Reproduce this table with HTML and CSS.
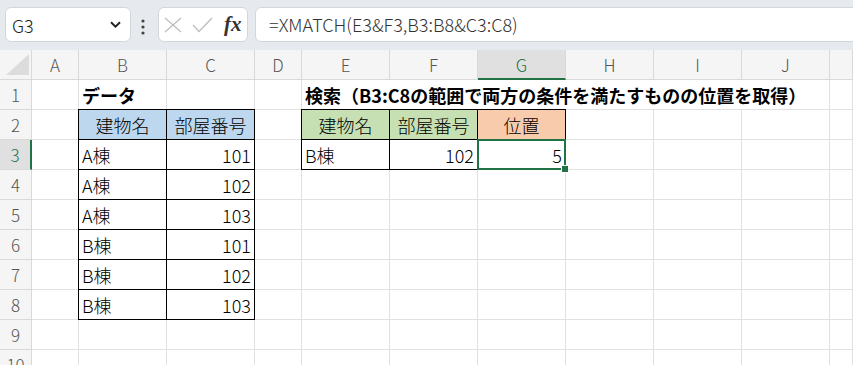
FILE: index.html
```html
<!DOCTYPE html>
<html lang="ja">
<head>
    <meta charset="UTF-8">
    <title>XMATCH</title>
    <link rel="stylesheet" href="styles.css">
</head>
<body>
    <!-- formula bar -->
    <div class="toolbar">
        <div class="name-box">
            <span>G3</span>
            <svg class="chev" width="11" height="7" viewBox="0 0 11 7"><path d="M1 1.2 L5.5 5.6 L10 1.2" fill="none" stroke="#222" stroke-width="2"/></svg>
        </div>
        <svg class="dots" width="6" height="16" viewBox="0 0 6 16"><circle cx="3" cy="2" r="1.6" fill="#444"/><circle cx="3" cy="8" r="1.6" fill="#444"/><circle cx="3" cy="14" r="1.6" fill="#444"/></svg>
        <div class="fx-box">
            <svg width="18" height="16" viewBox="0 0 18 16"><path d="M1 1 L17 15 M17 1 L1 15" stroke="#bdbdbd" stroke-width="1.3" fill="none"/></svg>
            <svg width="21" height="16" viewBox="0 0 21 16"><path d="M1 8 L7 14.5 L20 1" stroke="#bdbdbd" stroke-width="1.3" fill="none"/></svg>
            <span class="fx">fx</span>
        </div>
        <div class="formula">=XMATCH(E3&amp;F3,B3:B8&amp;C3:C8)</div>
    </div>

    <!-- sheet -->
    <div class="sheet">
        <div class="h corner"><svg width="23" height="21" viewBox="0 0 23 21"><path d="M0 21 L23 21 L23 0 Z" fill="#dcdcdc"/></svg></div>
        <div class="h">A</div>
        <div class="h">B</div>
        <div class="h">C</div>
        <div class="h">D</div>
        <div class="h">E</div>
        <div class="h">F</div>
        <div class="h sel-col">G</div>
        <div class="h">H</div>
        <div class="h">I</div>
        <div class="h">J</div>
        <div class="h"></div>

        <!-- row 1 -->
        <div class="h rh">1</div>
        <div class="c"></div>
        <div class="c bold">データ</div>
        <div class="c"></div>
        <div class="c"></div>
        <div class="c bold span6">検索（B3:C8の範囲で両方の条件を満たすものの位置を取得）</div>
        <div class="c"></div>

        <!-- row 2 -->
        <div class="h rh">2</div>
        <div class="c"></div>
        <div class="c tb top left blue ctr">建物名</div>
        <div class="c tb top blue ctr">部屋番号</div>
        <div class="c"></div>
        <div class="c tb top left green ctr">建物名</div>
        <div class="c tb top green ctr">部屋番号</div>
        <div class="c tb top peach ctr">位置</div>
        <div class="c"></div>
        <div class="c"></div>
        <div class="c"></div>
        <div class="c"></div>

        <!-- row 3 -->
        <div class="h rh sel-row">3</div>
        <div class="c"></div>
        <div class="c tb left">A棟</div>
        <div class="c tb num">101</div>
        <div class="c"></div>
        <div class="c tb left">B棟</div>
        <div class="c tb num">102</div>
        <div class="c tb num active">5</div>
        <div class="c"></div>
        <div class="c"></div>
        <div class="c"></div>
        <div class="c"></div>

        <!-- row 4 -->
        <div class="h rh">4</div>
        <div class="c"></div>
        <div class="c tb left">A棟</div>
        <div class="c tb num">102</div>
        <div class="c"></div><div class="c"></div><div class="c"></div><div class="c"></div>
        <div class="c"></div><div class="c"></div><div class="c"></div><div class="c"></div>

        <!-- row 5 -->
        <div class="h rh">5</div>
        <div class="c"></div>
        <div class="c tb left">A棟</div>
        <div class="c tb num">103</div>
        <div class="c"></div><div class="c"></div><div class="c"></div><div class="c"></div>
        <div class="c"></div><div class="c"></div><div class="c"></div><div class="c"></div>

        <!-- row 6 -->
        <div class="h rh">6</div>
        <div class="c"></div>
        <div class="c tb left">B棟</div>
        <div class="c tb num">101</div>
        <div class="c"></div><div class="c"></div><div class="c"></div><div class="c"></div>
        <div class="c"></div><div class="c"></div><div class="c"></div><div class="c"></div>

        <!-- row 7 -->
        <div class="h rh">7</div>
        <div class="c"></div>
        <div class="c tb left">B棟</div>
        <div class="c tb num">102</div>
        <div class="c"></div><div class="c"></div><div class="c"></div><div class="c"></div>
        <div class="c"></div><div class="c"></div><div class="c"></div><div class="c"></div>

        <!-- row 8 -->
        <div class="h rh">8</div>
        <div class="c"></div>
        <div class="c tb left">B棟</div>
        <div class="c tb num">103</div>
        <div class="c"></div><div class="c"></div><div class="c"></div><div class="c"></div>
        <div class="c"></div><div class="c"></div><div class="c"></div><div class="c"></div>

        <!-- row 9 -->
        <div class="h rh">9</div>
        <div class="c"></div><div class="c"></div><div class="c"></div><div class="c"></div>
        <div class="c"></div><div class="c"></div><div class="c"></div><div class="c"></div>
        <div class="c"></div><div class="c"></div><div class="c"></div>

        <!-- row 10 -->
        <div class="h rh">10</div>
        <div class="c"></div><div class="c"></div><div class="c"></div><div class="c"></div>
        <div class="c"></div><div class="c"></div><div class="c"></div><div class="c"></div>
        <div class="c"></div><div class="c"></div><div class="c"></div>
    </div>
</body>
</html>
```

FILE: styles.css
```css
body {
    margin: 0;
    font-family: "Noto Sans CJK JP", "Noto Sans", sans-serif;
    background: #fff;
    overflow: hidden;
}

/* formula bar */
.toolbar {
    display: flex;
    align-items: flex-start;
    height: 50px;
    box-sizing: border-box;
    padding: 7px 0 0 5px;
    background: #e6e9ee;
}

.name-box,
.fx-box,
.formula {
    box-sizing: border-box;
    height: 35px;
    background: #fff;
    border: 1px solid #d4d6da;
    border-radius: 6px;
}

.name-box {
    width: 126px;
    display: flex;
    align-items: center;
    justify-content: space-between;
    padding: 0 9px 0 6px;
    font-size: 18px;
    font-weight: 300;
    color: #222;
}

.dots {
    margin: 12px 12px 0 9px;
}

.fx-box {
    width: 90px;
    display: flex;
    align-items: center;
    padding: 0 0 0 5px;
    gap: 10px;
}

.fx {
    font-family: "Liberation Serif", serif;
    font-style: italic;
    font-weight: bold;
    font-size: 21px;
    color: #333;
    margin-left: 1px;
}

.formula {
    flex: 1;
    margin-left: 7px;
    margin-right: -10px;
    padding-left: 13px;
    font-size: 18px;
    font-weight: 300;
    line-height: 33px;
    color: #333;
}

/* grid */
.sheet {
    display: grid;
    grid-template-columns: 32px 47px 88px 88px 47px repeat(6, 88px) 1fr;
    grid-auto-rows: 30px;
}

.sheet > div {
    box-sizing: border-box;
    display: flex;
    align-items: center;
    white-space: nowrap;
}

.h {
    background: #f5f5f5;
    border-right: 1px solid #d9d9d9;
    border-bottom: 1px solid #d9d9d9;
    justify-content: center;
    color: #555;
    font-size: 17px;
    font-weight: 300;
}

.corner {
    align-items: flex-end !important;
    justify-content: flex-end !important;
    padding: 0 2px 4px 0;
}

.sel-col {
    background: #e0e0e0;
    border-bottom: 2px solid #217346;
    color: #217346;
}

.sel-row {
    background: #e0e0e0;
    border-right: 2px solid #217346;
    color: #217346;
}

.c {
    border-right: 1px solid #e1e1e1;
    border-bottom: 1px solid #e1e1e1;
    padding: 0 3px;
    font-size: 18px;
    font-weight: 300;
    color: #000;
}

.bold {
    font-weight: bold;
}

.span6 {
    grid-column: span 6;
}

/* bordered tables */
.tb {
    border-right: 1px solid #000;
    border-bottom: 1px solid #000;
}

.tb.top {
    box-shadow: 0 -1px 0 #000;
}

.tb.left {
    box-shadow: -1px 0 0 #000;
}

.tb.top.left {
    box-shadow: 0 -1px 0 #000, -1px 0 0 #000, -1px -1px 0 #000;
}

.ctr {
    justify-content: center;
}

.num {
    justify-content: flex-end;
}

.blue {
    background: #bdd7ee;
}

.green {
    background: #c6e0b4;
}

.peach {
    background: #f8cbad;
}

/* active cell */
.active {
    position: relative;
}

.active::after {
    content: "";
    position: absolute;
    left: -1px;
    top: -1px;
    right: -1px;
    bottom: -1px;
    border: 2px solid #217346;
}

.active::before {
    content: "";
    position: absolute;
    right: -4px;
    bottom: -4px;
    width: 6px;
    height: 6px;
    background: #217346;
    border: 1px solid #fff;
    z-index: 1;
}
```
